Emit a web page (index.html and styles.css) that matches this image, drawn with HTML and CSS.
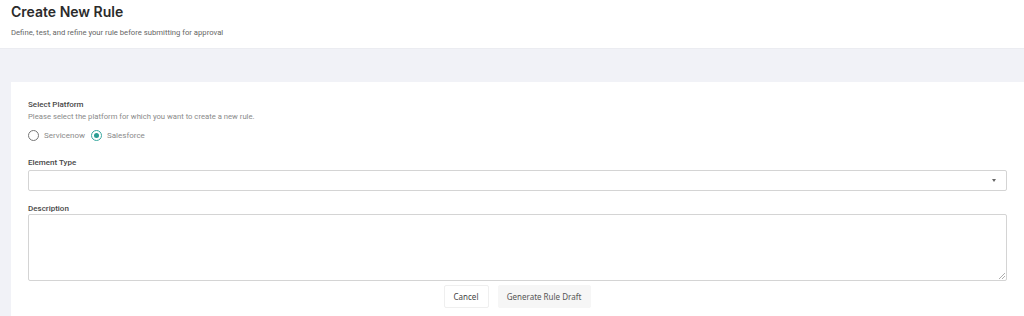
FILE: index.html
```html
<!DOCTYPE html>
<html lang="en">
<head>
    <link rel="stylesheet" href="styles.css">
</head>
<body>
<div class="page-header">
    <h1 class="page-title">Create New Rule</h1>
    <p class="page-subtitle">Define, test, and refine your rule before submitting for approval</p>
</div>
<div class="page-body">
    <div class="rule-card">
        <div class="field field-platform">
            <label class="field-label">Select Platform</label>
            <p class="field-help">Please select the platform for which you want to create a new rule.</p>
            <div class="radio-row">
                <label class="radio-option">
                    <span class="radio"></span>
                    Servicenow
                </label>
                <label class="radio-option">
                    <span class="radio checked"></span>
                    Salesforce
                </label>
            </div>
        </div>
        <div class="field">
            <label class="field-label">Element Type</label>
            <div class="select-box">
                <span class="caret"></span>
            </div>
        </div>
        <div class="field">
            <label class="field-label">Description</label>
            <div class="textarea-box">
                <svg class="resize" width="6" height="6" viewBox="0 0 6 6">
                    <path d="M6 0 L0 6 M6 3 L3 6" stroke="#999" stroke-width="0.8"/>
                </svg>
            </div>
        </div>
        <div class="actions">
            <button class="btn btn-cancel">Cancel</button>
            <button class="btn btn-draft">Generate Rule Draft</button>
        </div>
    </div>
</div>
</body>
</html>
```

FILE: styles.css
```css
* {
    box-sizing: border-box;
}

body {
    margin: 0;
    font-family: Roboto, "Liberation Sans", sans-serif;
    background-color: #f1f2f7;
    color: #333;
    overflow: hidden;
}

.page-header {
    background-color: #fff;
    height: 49px;
    padding: 3px 11px 0;
    border-bottom: 1px solid #ebecf1;
}

.page-title {
    margin: 0;
    font-family: Inter, Roboto, sans-serif;
    font-size: 14px;
    font-weight: 600;
    color: #2b2b2b;
    line-height: 18px;
}

.page-subtitle {
    margin: 7px 0 0;
    font-size: 7.7px;
    color: #666;
}

.page-body {
    padding: 33px 0 0 11px;
}

.rule-card {
    background-color: #fff;
    padding: 18px 18px 0 17px;
    height: 234px;
}

.field {
    margin-bottom: 13px;
}

.field-platform {
    margin-bottom: 17px;
}

.field-label {
    display: block;
    font-size: 8px;
    font-weight: 500;
    color: #484848;
    line-height: 10px;
}

.field-help {
    margin: 2px 0 0;
    font-size: 7.7px;
    color: #8a8a8a;
    line-height: 10px;
}

.radio-row {
    display: flex;
    gap: 6px;
    margin-top: 8px;
}

.radio-option {
    display: flex;
    align-items: center;
    gap: 5px;
    font-size: 8px;
    color: #8a8a8a;
    line-height: 11px;
}

.radio {
    width: 11px;
    height: 11px;
    border: 1px solid #777;
    border-radius: 50%;
    display: flex;
    align-items: center;
    justify-content: center;
}

.radio.checked {
    border-color: #3aa9a0;
}

.radio.checked::after {
    content: "";
    width: 5px;
    height: 5px;
    border-radius: 50%;
    background-color: #2a9d93;
}

.select-box {
    margin-top: 2px;
    height: 21px;
    width: 979px;
    border: 1px solid #d4d4d4;
    border-radius: 2px;
    position: relative;
}

.caret {
    position: absolute;
    right: 10px;
    top: 8px;
    border-left: 2.5px solid transparent;
    border-right: 2.5px solid transparent;
    border-top: 3px solid #666;
}

.textarea-box {
    margin-top: 0;
    height: 67px;
    width: 979px;
    border: 1px solid #d4d4d4;
    border-radius: 2px;
    position: relative;
}

.resize {
    position: absolute;
    right: 1px;
    bottom: 1px;
}

.actions {
    display: flex;
    justify-content: center;
    gap: 9px;
    margin-top: -9px;
}

.btn {
    font-family: "Noto Sans", Lato, sans-serif;
    font-size: 8px;
    color: #444;
    height: 23px;
    padding: 0 8px;
    border-radius: 2px;
    cursor: pointer;
}

.btn-cancel {
    background-color: #fff;
    border: 1px solid #efefef;
    width: 45px;
}

.btn-draft {
    background-color: #f6f6f6;
    border: 1px solid #f6f6f6;
    width: 93px;
    color: #555;
}
```
